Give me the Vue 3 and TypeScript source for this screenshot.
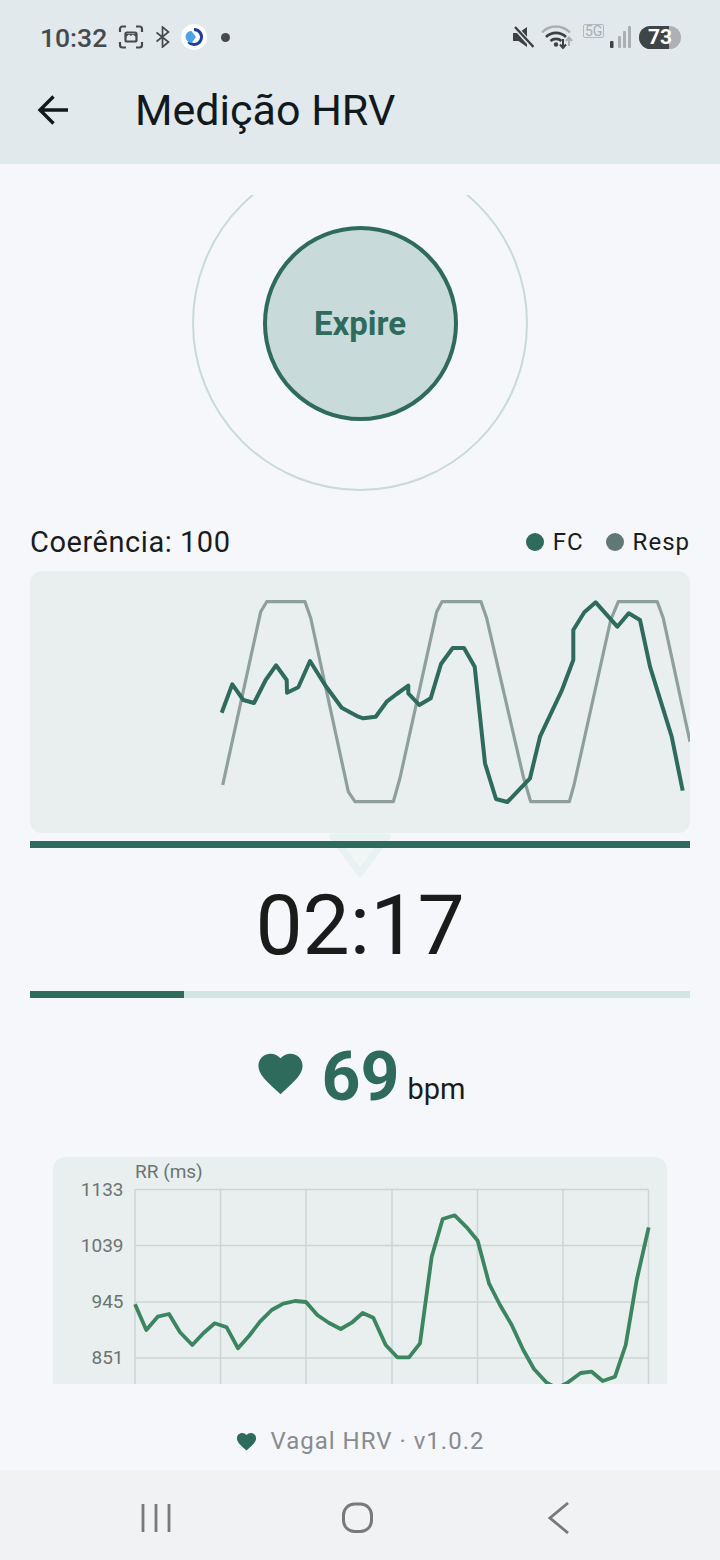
<template>
  <div class="screen">
    <header class="top">
      <div class="status">
        <span class="clock">10:32</span>
        <svg class="ic-shot" width="26" height="24" viewBox="0 0 26 24" fill="none" stroke="#454a4d" stroke-width="2.2">
          <path d="M2 7V4a2.500 2.500 0 0 1 2.500-2.500H8M18 1.500h3.500A2.500 2.500 0 0 1 24 4v3M24 17v3a2.500 2.500 0 0 1-2.500 2.500H18M8 22.500H4.500A2.500 2.500 0 0 1 2 20v-3" />
          <rect x="7.500" y="7.500" width="11" height="9" rx="1.500" />
          <path d="M8 12l3-2.500 2 1.500 2-1.500 3 2.500V9H8z" fill="#454a4d" stroke="none" />
        </svg>
        <svg class="ic-bt" width="14" height="22" viewBox="0 0 14 22" fill="none" stroke="#454a4d" stroke-width="1.700">
          <path d="M.5 6.500L12.500 16l-6 5V1l6 5L.5 15.500" />
        </svg>
        <svg class="ic-app" width="26" height="26" viewBox="0 0 26 26">
          <circle cx="13" cy="13" r="13" fill="#fff" />
          <path d="M13 5.500a7.500 7.500 0 1 1-5.500 12.600" fill="none" stroke="#1c3f9e" stroke-width="3" />
          <path d="M4.500 12c.500-3 3-5 6-5l4.500 6-4.500 6c-3 0-6-3-6-7z" fill="#4ba3e6" />
        </svg>
        <span class="dot"></span>
        <span class="grow"></span>
        <svg class="ic-mute" width="22" height="22" viewBox="0 0 22 22">
          <path d="M1 7h5.500L15 1v20l-8.500-6H1z" fill="#3c4144" />
          <path d="M2 0l19 21" stroke="#e1e9ec" stroke-width="5" />
          <path d="M3 1l18.500 20" stroke="#3c4144" stroke-width="2.400" />
        </svg>
        <svg class="ic-wifi" width="33" height="26" viewBox="0 0 33 26" fill="none">
          <path d="M1 8.500c7.500-8 20-8 28 0" stroke="#a9afb2" stroke-width="2.400" />
          <path d="M5 13c5.500-5.500 14.500-5.500 20 0" stroke="#3c4144" stroke-width="2.600" />
          <path d="M9.500 17c3-2.800 8-2.800 11 0" stroke="#3c4144" stroke-width="2.600" />
          <circle cx="15" cy="20.500" r="2.200" fill="#3c4144" />
          <path d="M22 15v8M19 20.500l3 3.500 3-3.500" stroke="#3c4144" stroke-width="2" />
          <path d="M28 22v-8M25 17l3-3.500 3 3.500" stroke="#a9afb2" stroke-width="2" />
        </svg>
        <span class="five">5G</span>
        <svg class="ic-signal" width="21" height="22" viewBox="0 0 21 22">
          <rect x="0" y="15" width="3.500" height="7" rx="1" fill="#3c4144" />
          <rect x="8" y="10" width="3" height="12" rx="1" fill="#a9afb2" />
          <rect x="13" y="5" width="3" height="17" rx="1" fill="#a9afb2" />
          <rect x="18" y="0" width="3" height="22" rx="1" fill="#a9afb2" />
        </svg>
        <div class="battery"><span class="battery-fill"></span><span class="battery-num">73</span></div>
      </div>
      <div class="appbar">
        <svg class="back" width="32" height="32" viewBox="0 0 32 32" fill="none" stroke="#12191c" stroke-width="3.400">
          <path d="M31 16H3M16.500 2.500L3 16l13.500 13.500" />
        </svg>
        <h1>Medição HRV</h1>
      </div>
    </header>

    <main class="body">
      <div class="breath">
        <div class="ring">
          <div class="ball">Expire</div>
        </div>
      </div>

      <div class="legend-row">
        <span class="score">Coerência: 100</span>
        <span class="legend">
          <i class="swatch fc"></i><span class="legend-fc">FC</span>
          <i class="swatch resp"></i><span>Resp</span>
        </span>
      </div>

      <div class="wave-card">
        <svg width="660" height="262" viewBox="30 571 660 262" fill="none">
          <polyline :points="respPoints" stroke="#8f9f9b" stroke-width="3.200" stroke-linejoin="round" />
          <polyline :points="fcPoints" stroke="#2f6b5c" stroke-width="4" stroke-linejoin="round" />
        </svg>
      </div>

      <div class="bar-wrap">
        <svg class="ghost" width="84" height="50" viewBox="0 0 84 50">
          <path d="M15 4H69L42 40z" fill="#f0f6f6" stroke="#e8f2f1" stroke-width="7" stroke-linejoin="round" />
        </svg>
        <div class="thick-bar"></div>
      </div>

      <div class="timer">02:17</div>

      <div class="track">
        <div class="track-fill" :style="{ width: progress + '%' }"></div>
      </div>

      <div class="pulse">
        <svg width="53" height="53" viewBox="0 0 24 24" fill="#2f6b5c"><path :d="heart" /></svg>
        <span class="bpm-val">69</span>
        <span class="bpm-unit">bpm</span>
      </div>

      <div class="rr-card">
        <svg width="614" height="227" viewBox="53 1157 614 227" fill="none">
          <g stroke="#cbd6d4" stroke-width="1.500">
            <line v-for="x in gridX" :key="x" :x1="x" :x2="x" y1="1189.500" y2="1384" />
            <line v-for="t in ticks" :key="t.label" x1="135" x2="648.500" :y1="t.y" :y2="t.y" />
          </g>
          <text x="135" y="1178" class="rr-label">RR (ms)</text>
          <text v-for="t in ticks" :key="t.label" x="123.500" :y="t.y + 6" text-anchor="end" class="rr-tick">{{ t.label }}</text>
          <polyline :points="rrPoints" stroke="#3c8561" stroke-width="3.800" stroke-linejoin="round" />
        </svg>
      </div>

      <div class="grow"></div>

      <footer class="foot">
        <svg width="23" height="23" viewBox="0 0 24 24" fill="#2f6b5c"><path :d="heart" /></svg>
        <span>Vagal HRV · v1.0.2</span>
      </footer>
    </main>

    <nav class="nav">
      <svg width="30" height="30" viewBox="0 0 30 30" stroke="#77797c" stroke-width="2.800">
        <path d="M2 1v28M15 1v28M28 1v28" />
      </svg>
      <svg class="nav-home" width="32" height="32" viewBox="0 0 32 32" fill="none" stroke="#77797c" stroke-width="3">
        <rect x="1.500" y="2" width="28" height="27.500" rx="11" />
      </svg>
      <svg class="nav-back" width="22" height="32" viewBox="0 0 22 32" fill="none" stroke="#77797c" stroke-width="2.800">
        <path d="M20 1L2 16l18 15" />
      </svg>
    </nav>
  </div>
</template>

<script setup lang="ts">
const progress = 23.3

const heart =
  'M12 21.35l-1.45-1.32C5.4 15.36 2 12.28 2 8.5 2 5.42 4.42 3 7.5 3c1.74 0 3.41.81 4.5 2.09C13.09 3.81 14.76 3 16.5 3 19.58 3 22 5.42 22 8.5c0 3.78-3.4 6.86-8.55 11.54L12 21.35z'

// traced from the live chart, in page coordinates
const respPoints =
  '222.7,785 260.7,611.7 266.7,601.7 305,601.7 310.7,618 348.3,791.7 355,801.7 393.3,801.7 400,778 436.7,611.7 442,601.7 481,601.7 486.7,618.3 523.3,776.7 530.7,801.7 569.3,801.7 574,785 610.7,620 618.3,601.7 657.3,601.7 663.3,618.3 690,741.7'

const fcPoints =
  '221.7,712.7 232.3,684.3 243.3,700 254,703 265.7,680 276,665.3 286.7,680 287,692.7 298.3,687.3 310,661 325,685 341.7,707.7 358.3,716.7 363.3,718.3 375.7,716.7 386.7,701.7 396.7,694 408.3,685.7 408.3,693.3 419.3,705 430.7,698.3 441,664 452.7,648 464,648 474.7,666.7 485,763.3 496,799 507.3,802 530,778.3 540,736.7 561.7,690.7 573.3,660 573.3,630 584.3,612.3 595.7,602.3 617.3,626.7 628.7,613.3 640,620 650,666.7 671.7,736.7 682.7,790.7'

const rrPoints =
  '135,1304.3 146.3,1330 157.7,1316.7 169,1314 180,1332.3 192.3,1345 203.3,1333.3 214.7,1323.3 226.7,1327.3 238,1348.3 249,1336 260,1321.7 271.7,1310 283.3,1303.7 295,1301 306,1302 317.3,1315 328.7,1322.7 340.7,1329 351.7,1322.7 362.7,1313 373.3,1317.7 385.7,1345 397.3,1357.3 409,1357.3 420,1343.3 431.7,1256.7 442.7,1219 454.7,1215.3 466.7,1227.3 477.7,1240.7 489,1283.3 500,1305 511.7,1325 523.3,1350 534,1369 546.7,1382.7 556.7,1388 566.7,1383.3 580.7,1373 591.7,1371.7 602.7,1381 615,1376.7 625.7,1345 636.7,1280 648.7,1227.3'

const gridX = [135, 220.5, 306, 392, 477.5, 563, 648.5]

const ticks = [
  { label: '1133', y: 1189.5 },
  { label: '1039', y: 1245.5 },
  { label: '945', y: 1302 },
  { label: '851', y: 1358 },
]
</script>

<style>
html,
body {
  margin: 0;
  background: #f5f7fa;
}
</style>

<style scoped>
.screen {
  width: 720px;
  height: 1560px;
  display: flex;
  flex-direction: column;
  background: #f5f7fa;
  font-family: Roboto, sans-serif;
  color: #1a1c1c;
  overflow: hidden;
}

.top {
  height: 164px;
  background: #e1e9ec;
  flex-shrink: 0;
}

.status {
  height: 74px;
  display: flex;
  align-items: center;
  padding: 0 39px 0 40px;
  color: #454a4d;
}

.clock {
  font-size: 26.500px;
  font-weight: 500;
}

.ic-shot {
  margin-left: 11px;
}

.ic-bt {
  margin-left: 12px;
}

.ic-app {
  margin-left: 11px;
}

.dot {
  width: 9px;
  height: 9px;
  border-radius: 50%;
  background: #454a4d;
  margin-left: 14px;
}

.grow {
  flex: 1;
}

.ic-wifi {
  margin-left: 7px;
}

.five {
  margin-left: 9px;
  margin-bottom: 13px;
  border: 1.500px solid #b3b9bc;
  border-radius: 2px;
  color: #a9afb2;
  font-size: 14px;
  line-height: 12px;
  padding: 0 1px;
  width: 17px;
  text-align: center;
}

.ic-signal {
  margin-left: 6px;
}

.battery {
  position: relative;
  width: 42px;
  height: 23px;
  margin-left: 8px;
  border-radius: 12px;
  background: #adb1b3;
  overflow: hidden;
  display: flex;
  align-items: center;
  justify-content: center;
}

.battery-fill {
  position: absolute;
  left: 0;
  top: 0;
  bottom: 0;
  width: 30px;
  background: #3f4446;
}

.battery-num {
  position: relative;
  color: #fff;
  font-size: 21px;
  font-weight: 700;
}

.appbar {
  height: 72px;
  display: flex;
  align-items: center;
  padding-left: 37px;
}

.back {
  flex-shrink: 0;
}

h1 {
  margin: 0 0 0 66px;
  font-size: 43px;
  font-weight: 400;
  color: #12191c;
}

.body {
  flex: 1;
  display: flex;
  flex-direction: column;
  padding: 31px 30px 0;
  min-height: 0;
}

.breath {
  height: 296px;
  display: flex;
  justify-content: center;
  align-items: flex-end;
  overflow: hidden;
  flex-shrink: 0;
}

.ring {
  width: 336px;
  height: 336px;
  flex-shrink: 0;
  box-sizing: border-box;
  border: 2px solid #c9dad7;
  border-radius: 50%;
  display: flex;
  align-items: center;
  justify-content: center;
}

.ball {
  width: 195px;
  height: 195px;
  flex-shrink: 0;
  box-sizing: border-box;
  border: 4px solid #2f6b5c;
  border-radius: 50%;
  background: #c9dadb;
  color: #2f6b5c;
  font-size: 33px;
  font-weight: 700;
  display: flex;
  align-items: center;
  justify-content: center;
}

.legend-row {
  height: 46px;
  margin-top: 28px;
  display: flex;
  align-items: center;
  justify-content: space-between;
}

.score {
  font-size: 29px;
  letter-spacing: 0.550px;
}

.legend {
  display: flex;
  align-items: center;
  font-size: 24px;
  letter-spacing: 1px;
}

.swatch {
  width: 18px;
  height: 18px;
  border-radius: 50%;
  margin-right: 9px;
}

.swatch.fc {
  background: #2f6b5c;
}

.swatch.resp {
  background: #607876;
}

.legend-fc {
  margin-right: 22px;
}

.wave-card {
  height: 262px;
  margin-top: 6px;
  border-radius: 12px;
  background: #e8efee;
  overflow: hidden;
  flex-shrink: 0;
}

.wave-card svg,
.rr-card svg {
  display: block;
}

.bar-wrap {
  position: relative;
  height: 15px;
  flex-shrink: 0;
}

.ghost {
  position: absolute;
  left: 288px;
  top: 0;
}

.thick-bar {
  position: absolute;
  left: 0;
  right: 0;
  bottom: 0;
  height: 7.500px;
  background: #2f6b5c;
}

.timer {
  height: 143px;
  box-sizing: border-box;
  padding-top: 11px;
  display: flex;
  align-items: center;
  justify-content: center;
  font-size: 84px;
  flex-shrink: 0;
  position: relative;
}

.track {
  height: 7px;
  background: #d3e5e0;
  flex-shrink: 0;
}

.track-fill {
  height: 100%;
  background: #2f6b5c;
}

.pulse {
  height: 86px;
  margin-top: 32px;
  display: flex;
  align-items: center;
  justify-content: center;
  flex-shrink: 0;
}

.bpm-val {
  margin-left: 14px;
  margin-top: 8px;
  font-size: 68px;
  font-weight: 700;
  color: #2f6b5c;
}

.bpm-unit {
  margin-left: 8px;
  margin-top: 32px;
  font-size: 29px;
}

.rr-card {
  height: 227px;
  margin: 41px 23px 0;
  border-radius: 12px 12px 0 0;
  background: #e8efee;
  overflow: hidden;
  flex-shrink: 0;
}

.rr-label,
.rr-tick {
  font-family: Roboto, sans-serif;
  font-size: 19px;
  fill: #6b7573;
  stroke: none;
}

.foot {
  height: 58px;
  display: flex;
  align-items: center;
  justify-content: center;
  gap: 12px;
  font-size: 24px;
  letter-spacing: 1px;
  color: #888c8f;
  flex-shrink: 0;
}

.nav {
  height: 90px;
  box-sizing: border-box;
  background: #f1f2f4;
  flex-shrink: 0;
  display: flex;
  align-items: center;
  padding: 6px 0 0 141px;
}

.nav-home {
  margin-left: 171px;
}

.nav-back {
  margin-left: 174px;
}
</style>
